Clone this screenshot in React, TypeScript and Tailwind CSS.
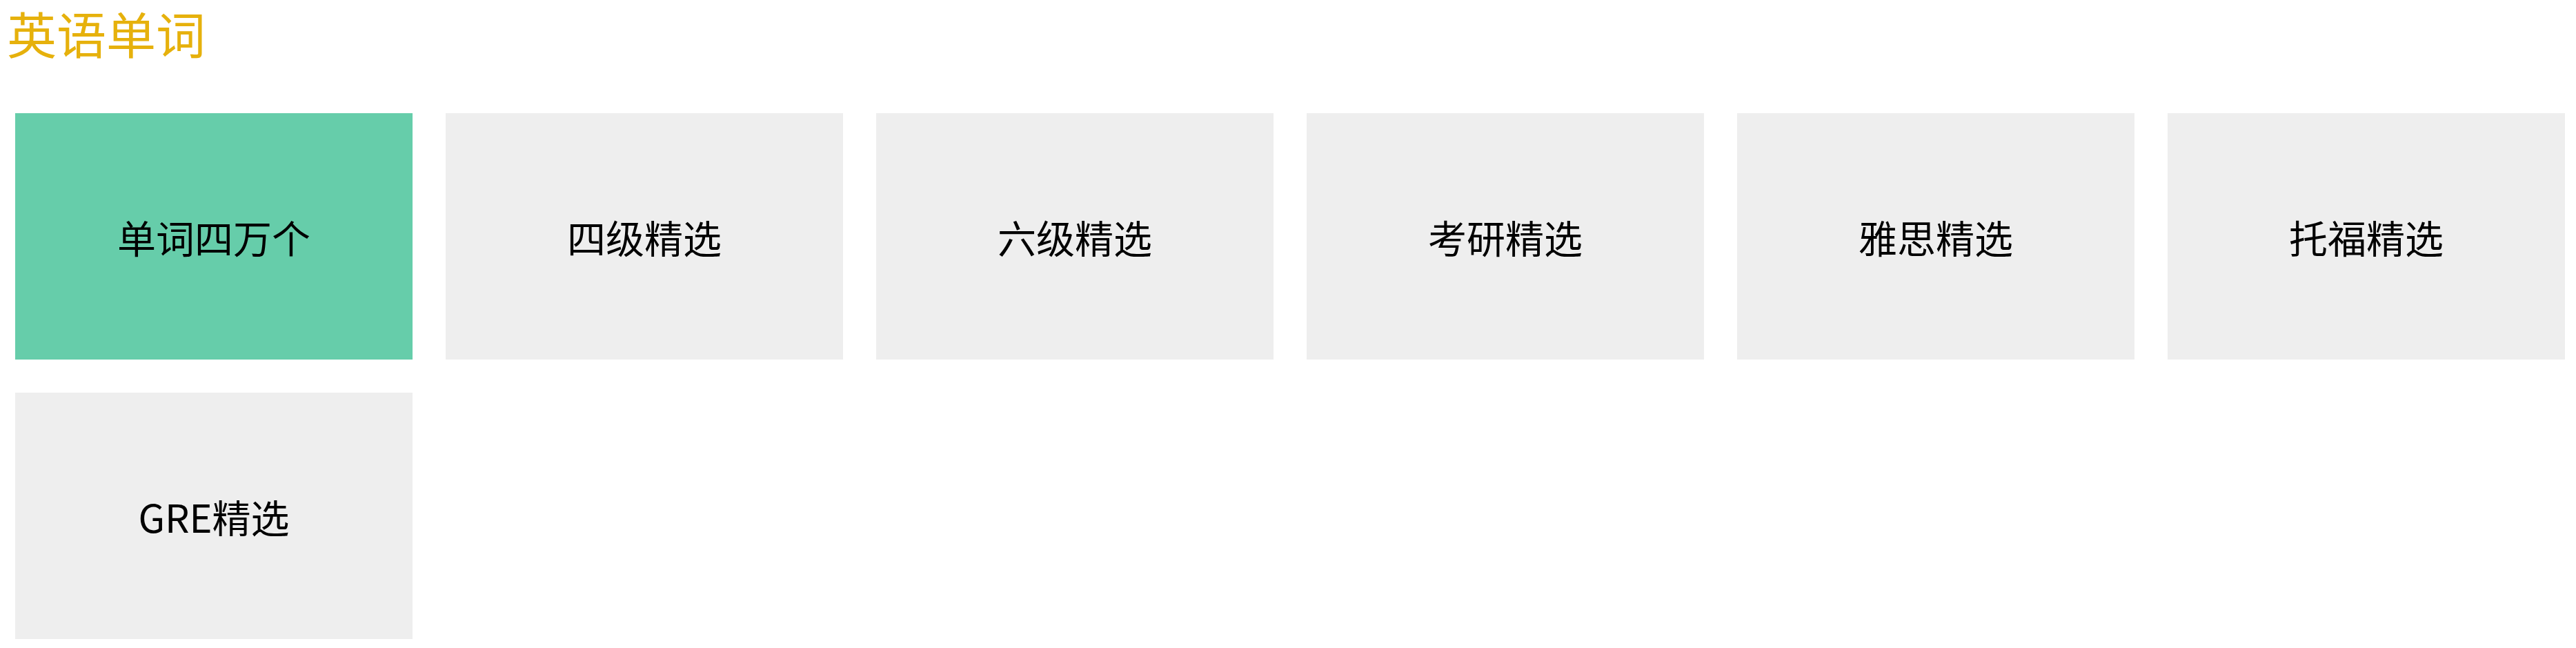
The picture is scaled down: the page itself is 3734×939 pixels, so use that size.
const words = ["单词四万个", "四级精选", "六级精选", "考研精选", "雅思精选", "托福精选", "GRE精选"];

export default function App() {
  return (
    <div className="min-h-screen bg-white font-['Microsoft_YaHei','Noto_Sans_CJK_SC',sans-serif]">
      <h1 className="pl-[10px] pt-[4px] text-[72px] leading-[86px] text-[#e6b10c]">英语单词</h1>
      <div className="flex flex-wrap gap-[48px] pl-[22px] pt-[74px]">
        {words.map((w, i) => (
          <div
            key={w}
            className={`flex h-[357px] w-[576px] items-center justify-center text-[56px] text-black ${
              i === 0 ? "bg-[#66cdaa]" : "bg-[#eeeeee]"
            }`}
          >
            {w}
          </div>
        ))}
      </div>
    </div>
  );
}
